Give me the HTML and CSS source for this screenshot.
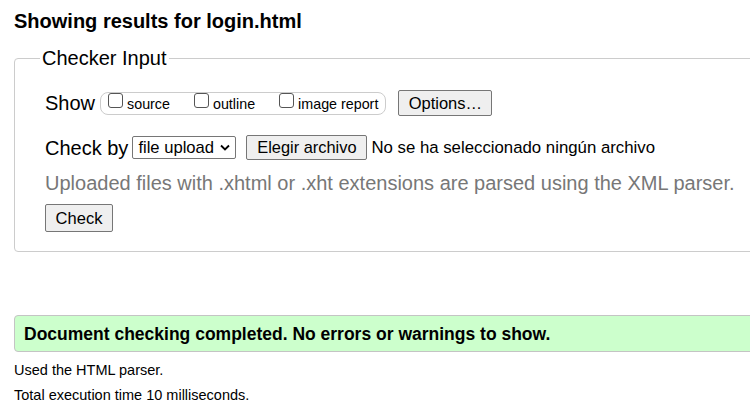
FILE: index.html
```html
<!DOCTYPE html>
<html>
<head>
<meta charset="utf-8">
<link rel="stylesheet" href="styles.css">
</head>
<body>
<h2 class="title">Showing results for login.html</h2>
<fieldset class="checker">
  <legend class="legend">Checker Input</legend>
  <div class="row show-row">
    <span class="label">Show</span>
    <span class="opts">
      <label class="opt"><span class="cb"></span><span class="opt-text">source</span></label>
      <label class="opt"><span class="cb"></span><span class="opt-text">outline</span></label>
      <label class="opt"><span class="cb"></span><span class="opt-text">image report</span></label>
    </span>
    <span class="btn options">Options…</span>
  </div>
  <div class="row by-row">
    <span class="label">Check by</span>
    <span class="select">file upload<svg class="chev" width="10" height="7" viewBox="0 0 10 7"><path d="M1 1.5 L5 5.5 L9 1.5" fill="none" stroke="#000" stroke-width="1.8"/></svg></span>
    <span class="btn file">Elegir archivo</span>
    <span class="nofile">No se ha seleccionado ningún archivo</span>
  </div>
  <p class="help">Uploaded files with .xhtml or .xht extensions are parsed using the XML parser.</p>
  <div class="row check-row"><span class="btn check">Check</span></div>
</fieldset>
<p class="success">Document checking completed. No errors or warnings to show.</p>
<p class="info">Used the HTML parser.</p>
<p class="info">Total execution time 10 milliseconds.</p>
</body>
</html>
```
FILE: styles.css
```css
html { overflow: hidden; }
body {
  margin: 0;
  padding: 0 0 0 14px;
  font-family: "Liberation Sans", Arial, sans-serif;
  color: #000;
  background: #fff;
  width: 800px;
}
.title {
  font-size: 20px;
  font-weight: bold;
  margin: 10px 0 0 0;
  line-height: 22px;
}
.checker {
  margin: 15px 0 0 0;
  padding: 0 0 19px 30px;
  border: 1px solid #ccc;
  border-radius: 4px;
  min-width: 0;
}
.legend {
  font-size: 20px;
  padding: 0 2px;
  margin-left: -5px;
  line-height: 22px;
}
.row {
  display: flex;
  align-items: center;
}
.show-row { margin-top: 21px; }
.label { font-size: 20px; line-height: 24px; }
.opts {
  display: flex;
  align-items: center;
  margin-left: 5px;
  border: 1px solid #ccc;
  border-radius: 8px;
  height: 23px;
  box-sizing: border-box;
  padding: 0 7px 0 7px;
  gap: 24px;
}
.opt {
  display: flex;
  align-items: center;
  font-size: 14.3px;
  line-height: 16px;
}
.opt-text { position: relative; top: 1px; }
.cb {
  width: 15px;
  height: 15px;
  border: 1px solid #555;
  border-radius: 3px;
  margin-right: 4px;
  box-sizing: border-box;
  background: #fff;
  position: relative;
  top: -3px;
}
.btn {
  display: inline-flex;
  align-items: center;
  justify-content: center;
  border: 1px solid #767676;
  border-radius: 2px;
  background: #efefef;
  box-sizing: border-box;
}
.options { margin-left: 12px; width: 94px; height: 26px; font-size: 16.5px; }
.by-row { margin-top: 19px; }
.select {
  display: inline-flex;
  align-items: center;
  margin-left: 4px;
  height: 23px;
  width: 104px;
  box-sizing: border-box;
  border: 1px solid #767676;
  border-radius: 2px;
  font-size: 16.6px;
  padding-left: 5px;
}
.chev { margin-left: 6px; }
.file { margin-left: 10px; width: 121px; height: 25px; font-size: 16.4px; }
.nofile { margin-left: 4px; font-size: 16.8px; }
.help {
  font-size: 20px;
  color: #777;
  margin: 11px 0 0 0;
  line-height: 24px;
}
.check-row { margin-top: 9px; }
.check { width: 68px; height: 28px; font-size: 16.5px; }
.success {
  margin: 63px 0 0 0;
  background: #ccffcc;
  border: 1px solid #c4c4c4;
  border-radius: 4px;
  padding: 9px 9px 8px;
  font-weight: bold;
  font-size: 17.5px;
  line-height: 18px;
}
.info { font-size: 14.5px; margin: 10px 0 0 0; line-height: 17px; }
.info + .info { margin-top: 8px; }
```
